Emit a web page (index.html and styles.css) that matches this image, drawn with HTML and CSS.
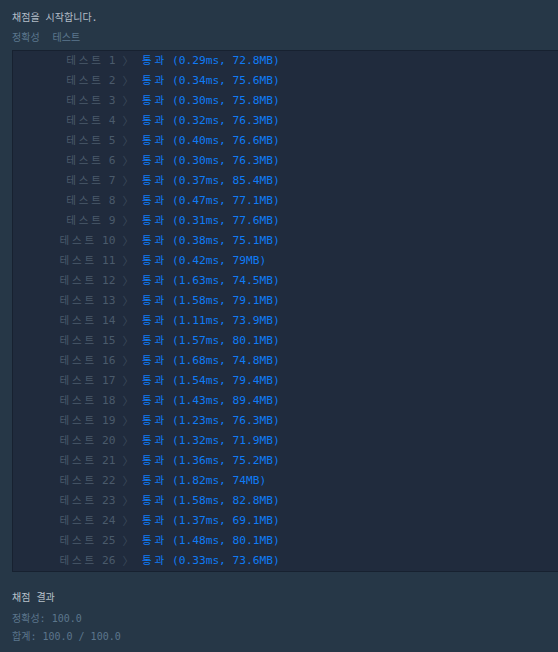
FILE: index.html
```html
<!DOCTYPE html>
<html lang="ko">
<head>
<meta charset="utf-8">
<title>채점</title>
<link rel="stylesheet" href="styles.css">
</head>
<body>
<div class="page">
  <p class="title">채점을 시작합니다.</p>
  <div class="tabs"><span class="tab">정확성</span><span class="tab">테스트</span></div>
  <div class="console">
    <div class="row"><span class="label"><span class="ko">테스트 </span>1</span><span class="arrow">〉</span><span class="result"><span class="ko">통과 </span>(0.29ms, 72.8MB)</span></div>
    <div class="row"><span class="label"><span class="ko">테스트 </span>2</span><span class="arrow">〉</span><span class="result"><span class="ko">통과 </span>(0.34ms, 75.6MB)</span></div>
    <div class="row"><span class="label"><span class="ko">테스트 </span>3</span><span class="arrow">〉</span><span class="result"><span class="ko">통과 </span>(0.30ms, 75.8MB)</span></div>
    <div class="row"><span class="label"><span class="ko">테스트 </span>4</span><span class="arrow">〉</span><span class="result"><span class="ko">통과 </span>(0.32ms, 76.3MB)</span></div>
    <div class="row"><span class="label"><span class="ko">테스트 </span>5</span><span class="arrow">〉</span><span class="result"><span class="ko">통과 </span>(0.40ms, 76.6MB)</span></div>
    <div class="row"><span class="label"><span class="ko">테스트 </span>6</span><span class="arrow">〉</span><span class="result"><span class="ko">통과 </span>(0.30ms, 76.3MB)</span></div>
    <div class="row"><span class="label"><span class="ko">테스트 </span>7</span><span class="arrow">〉</span><span class="result"><span class="ko">통과 </span>(0.37ms, 85.4MB)</span></div>
    <div class="row"><span class="label"><span class="ko">테스트 </span>8</span><span class="arrow">〉</span><span class="result"><span class="ko">통과 </span>(0.47ms, 77.1MB)</span></div>
    <div class="row"><span class="label"><span class="ko">테스트 </span>9</span><span class="arrow">〉</span><span class="result"><span class="ko">통과 </span>(0.31ms, 77.6MB)</span></div>
    <div class="row"><span class="label"><span class="ko">테스트 </span>10</span><span class="arrow">〉</span><span class="result"><span class="ko">통과 </span>(0.38ms, 75.1MB)</span></div>
    <div class="row"><span class="label"><span class="ko">테스트 </span>11</span><span class="arrow">〉</span><span class="result"><span class="ko">통과 </span>(0.42ms, 79MB)</span></div>
    <div class="row"><span class="label"><span class="ko">테스트 </span>12</span><span class="arrow">〉</span><span class="result"><span class="ko">통과 </span>(1.63ms, 74.5MB)</span></div>
    <div class="row"><span class="label"><span class="ko">테스트 </span>13</span><span class="arrow">〉</span><span class="result"><span class="ko">통과 </span>(1.58ms, 79.1MB)</span></div>
    <div class="row"><span class="label"><span class="ko">테스트 </span>14</span><span class="arrow">〉</span><span class="result"><span class="ko">통과 </span>(1.11ms, 73.9MB)</span></div>
    <div class="row"><span class="label"><span class="ko">테스트 </span>15</span><span class="arrow">〉</span><span class="result"><span class="ko">통과 </span>(1.57ms, 80.1MB)</span></div>
    <div class="row"><span class="label"><span class="ko">테스트 </span>16</span><span class="arrow">〉</span><span class="result"><span class="ko">통과 </span>(1.68ms, 74.8MB)</span></div>
    <div class="row"><span class="label"><span class="ko">테스트 </span>17</span><span class="arrow">〉</span><span class="result"><span class="ko">통과 </span>(1.54ms, 79.4MB)</span></div>
    <div class="row"><span class="label"><span class="ko">테스트 </span>18</span><span class="arrow">〉</span><span class="result"><span class="ko">통과 </span>(1.43ms, 89.4MB)</span></div>
    <div class="row"><span class="label"><span class="ko">테스트 </span>19</span><span class="arrow">〉</span><span class="result"><span class="ko">통과 </span>(1.23ms, 76.3MB)</span></div>
    <div class="row"><span class="label"><span class="ko">테스트 </span>20</span><span class="arrow">〉</span><span class="result"><span class="ko">통과 </span>(1.32ms, 71.9MB)</span></div>
    <div class="row"><span class="label"><span class="ko">테스트 </span>21</span><span class="arrow">〉</span><span class="result"><span class="ko">통과 </span>(1.36ms, 75.2MB)</span></div>
    <div class="row"><span class="label"><span class="ko">테스트 </span>22</span><span class="arrow">〉</span><span class="result"><span class="ko">통과 </span>(1.82ms, 74MB)</span></div>
    <div class="row"><span class="label"><span class="ko">테스트 </span>23</span><span class="arrow">〉</span><span class="result"><span class="ko">통과 </span>(1.58ms, 82.8MB)</span></div>
    <div class="row"><span class="label"><span class="ko">테스트 </span>24</span><span class="arrow">〉</span><span class="result"><span class="ko">통과 </span>(1.37ms, 69.1MB)</span></div>
    <div class="row"><span class="label"><span class="ko">테스트 </span>25</span><span class="arrow">〉</span><span class="result"><span class="ko">통과 </span>(1.48ms, 80.1MB)</span></div>
    <div class="row"><span class="label"><span class="ko">테스트 </span>26</span><span class="arrow">〉</span><span class="result"><span class="ko">통과 </span>(0.33ms, 73.6MB)</span></div>
  </div>
  <p class="summary-title">채점 결과</p>
  <p class="summary-line">정확성: 100.0</p>
  <p class="summary-line">합계: 100.0 / 100.0</p>
</div>
</body>
</html>
```

FILE: styles.css
```css
html, body {
  margin: 0;
  padding: 0;
  background: #263747;
}

body {
  font-family: "DejaVu Sans Mono", "Noto Sans CJK KR", monospace;
  font-size: 10px;
  overflow: hidden;
}

.page {
  padding: 8px 0 0 12px;
}

.title {
  margin: 0;
  line-height: 20px;
  color: #b3bdc7;
}

.tabs {
  margin-top: 0;
  display: flex;
  gap: 13px;
  line-height: 20px;
  color: #5c778e;
}

.console {
  margin-top: 2px;
  background: #202b3d;
  border: 1px solid #172130;
  border-right: none;
  font-size: 11.2px;
}

.row {
  display: flex;
  height: 20px;
  line-height: 18px;
  padding-bottom: 2px;
  box-sizing: border-box;
  white-space: pre;
}

.label {
  width: 102.5px;
  text-align: right;
  color: #4a5a6b;
}

.ko {
  font-family: "Noto Sans CJK KR", sans-serif;
  font-size: 10.5px;
  letter-spacing: 2.9px;
  word-spacing: -1px;
}

.arrow {
  width: 26.5px;
  padding-left: 7px;
  box-sizing: border-box;
  font-family: "Noto Sans CJK KR", sans-serif;
  font-size: 11px;
  color: #3a495a;
}

.result {
  color: #0f7bf5;
}

.summary-title {
  margin: 16px 0 0;
  line-height: 20px;
  color: #b7c1ca;
}

.summary-line {
  margin: 0;
  line-height: 18px;
  color: #5c768c;
}

.summary-title + .summary-line {
  margin-top: 2px;
}
```
